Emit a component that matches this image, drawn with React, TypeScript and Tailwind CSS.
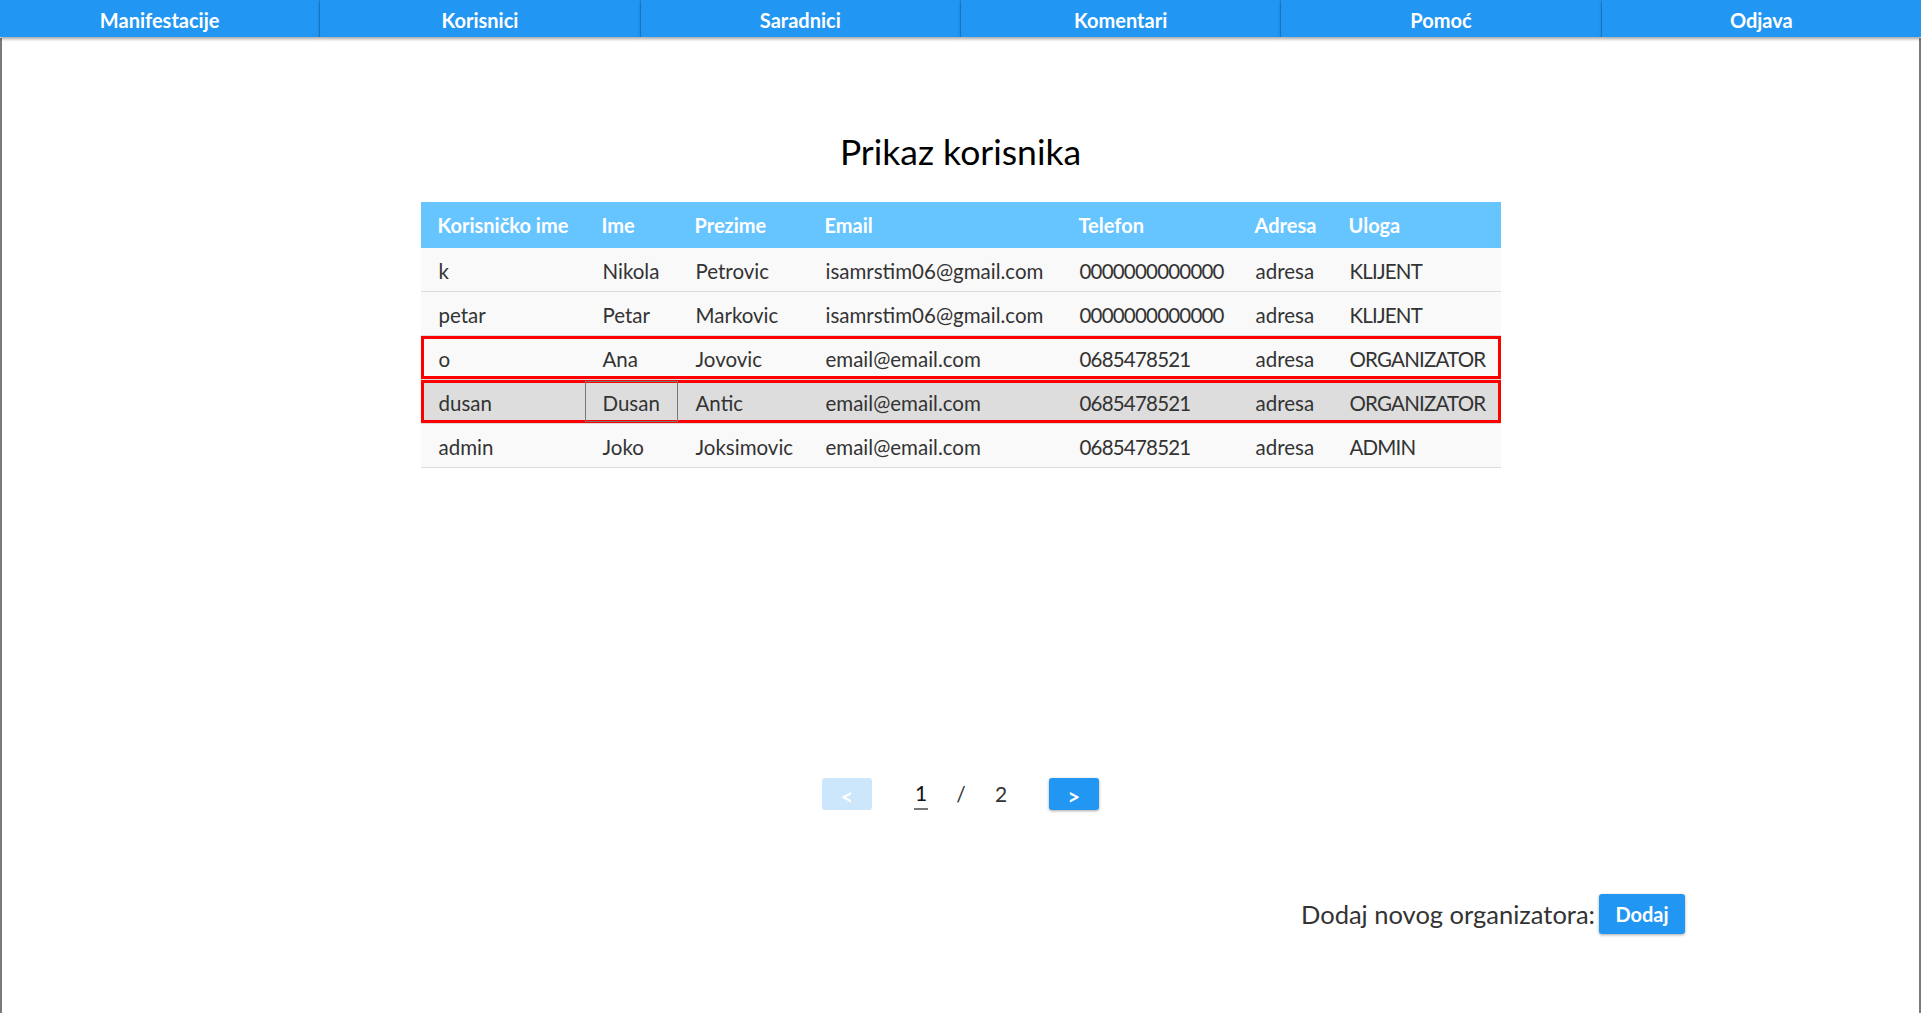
import React from "react";

const navItems = ["Manifestacije", "Korisnici", "Saradnici", "Komentari", "Pomoć", "Odjava"];

const columns = ["Korisničko ime", "Ime", "Prezime", "Email", "Telefon", "Adresa", "Uloga"];

const users = [
  ["k", "Nikola", "Petrovic", "isamrstim06@gmail.com", "0000000000000", "adresa", "KLIJENT"],
  ["petar", "Petar", "Markovic", "isamrstim06@gmail.com", "0000000000000", "adresa", "KLIJENT"],
  ["o", "Ana", "Jovovic", "email@email.com", "0685478521", "adresa", "ORGANIZATOR"],
  ["dusan", "Dusan", "Antic", "email@email.com", "0685478521", "adresa", "ORGANIZATOR"],
  ["admin", "Joko", "Joksimovic", "email@email.com", "0685478521", "adresa", "ADMIN"],
];

const gridCols = "grid grid-cols-[164px_93px_130px_254px_176px_94px_169px]";

export default function App() {
  return (
    <div className="min-h-[1013px] bg-white font-['Lato','Liberation_Sans',sans-serif] text-[#333]">
      {/* navigacija */}
      <nav className="flex h-[38px] bg-white relative z-10">
        {navItems.map((item) => (
          <button
            key={item}
            className="flex-1 h-[37px] pt-[2px] bg-[#2196f3] text-white font-bold text-[20px] border-r border-[#1b86dc] last:border-r-0 shadow-[0_2px_3px_rgba(0,0,0,0.35)]"
          >
            {item}
          </button>
        ))}
      </nav>

      <main className="border-l-2 border-r-2 border-[#7a7a7a] min-h-[975px] flex flex-col items-center">
        <h1 className="mt-[92px] text-[35.5px] leading-[44px] text-black">Prikaz korisnika</h1>

        <div className="mt-[28px] w-[1080px] text-[20.5px]">
          <div className={`${gridCols} h-[46px] items-center bg-[#66c4ff] text-white font-bold text-[20px]`}>
            {columns.map((c) => (
              <div key={c} className="pl-[17px] whitespace-nowrap">
                {c}
              </div>
            ))}
          </div>
          {users.map((u, i) => (
            <div
              key={u[0]}
              className={`${gridCols} h-[44px] border-b border-[#dcdcdc] ${
                i === 3 ? "bg-[#dddddd]" : "bg-[#f9f9f9]"
              } ${i === 2 || i === 3 ? "ring-3 ring-inset ring-[#ff0000]" : ""}`}
            >
              {u.map((v, j) => (
                <div
                  key={j}
                  className={`flex items-center pl-[17px] pt-[3px] whitespace-nowrap border ${
                    j === 4 || j === 6 ? "tracking-[-0.8px]" : ""
                  } ${i === 3 && j === 1 ? "border-[#777] my-[1px]" : "border-transparent"}`}
                >
                  {v}
                </div>
              ))}
            </div>
          ))}
        </div>

        {/* paginacija */}
        <div className="mt-[310px] flex items-center">
          <button className="w-[50px] h-[32px] rounded-[3px] bg-[#cce6fc] text-white font-bold text-[22px] leading-none pt-[6px] mr-[29px]">
            &lt;
          </button>
          <div className="w-[40px] flex justify-center">
            <span className="w-[14px] text-center text-[21px] text-[#111] border-b-2 border-[#777] leading-[30px]">1</span>
          </div>
          <div className="w-[40px] text-center text-[21px]">/</div>
          <div className="w-[40px] text-center text-[21px]">2</div>
          <button className="w-[50px] h-[32px] rounded-[3px] bg-[#2196f3] text-white font-bold text-[22px] leading-none pt-[6px] ml-[28px] shadow-[0_1px_3px_rgba(0,0,0,0.35)]">
            &gt;
          </button>
        </div>

        <div className="mt-[84px] w-full flex justify-end items-center pr-[234px]">
          <span className="text-[25.5px] mr-[4px]">Dodaj novog organizatora:</span>
          <button className="w-[86px] h-[40px] rounded-[3px] bg-[#2196f3] text-white font-bold text-[20px] shadow-[0_1px_3px_rgba(0,0,0,0.35)]">
            Dodaj
          </button>
        </div>
      </main>
    </div>
  );
}
